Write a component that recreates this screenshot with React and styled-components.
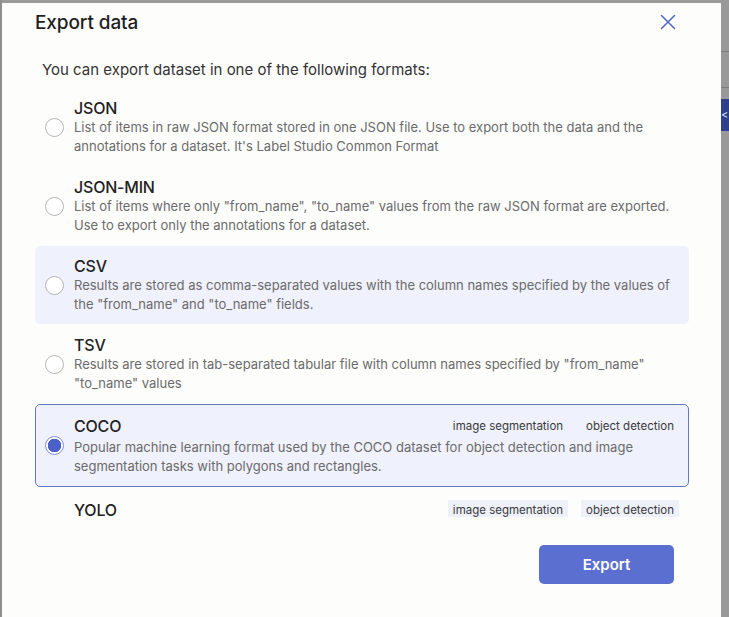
import React, { useState } from "react"
import styled, { createGlobalStyle } from "styled-components"

const GlobalStyle = createGlobalStyle`
    body {
        margin: 0;
        background: #9a9a9a;
        font-family: Inter, "Noto Sans", sans-serif;
        -webkit-font-smoothing: antialiased;
    }
`

const formats = [
    {
        id: "JSON",
        title: "JSON",
        description: "List of items in raw JSON format stored in one JSON file. Use to export both the data and the annotations for a dataset. It's Label Studio Common Format",
    },
    {
        id: "JSON_MIN",
        title: "JSON-MIN",
        description: "List of items where only \"from_name\", \"to_name\" values from the raw JSON format are exported. Use to export only the annotations for a dataset.",
    },
    {
        id: "CSV",
        title: "CSV",
        description: "Results are stored as comma-separated values with the column names specified by the values of the \"from_name\" and \"to_name\" fields.",
        hovered: true,
    },
    {
        id: "TSV",
        title: "TSV",
        description: "Results are stored in tab-separated tabular file with column names specified by \"from_name\" \"to_name\" values",
    },
    {
        id: "COCO",
        title: "COCO",
        tags: ["image segmentation", "object detection"],
        description: "Popular machine learning format used by the COCO dataset for object detection and image segmentation tasks with polygons and rectangles.",
    },
    {
        id: "YOLO",
        title: "YOLO",
        tags: ["image segmentation", "object detection"],
        description: "Popular TXT format is created for each image file. Each txt file contains annotations for the corresponding image file, that is object class, object coordinates, height & width.",
    },
]

const App = () => {

    const [selected, setSelected] = useState("COCO")

    return (
        <>
            <GlobalStyle />
            <Backdrop>
                <LeftStrip />
                <Modal>
                    <Header>
                        <Title>Export data</Title>
                        <CloseButton aria-label="Close">
                            <svg width="16" height="16" viewBox="0 0 16 16" fill="none">
                                <path d="M1.5 1.5L14.5 14.5M14.5 1.5L1.5 14.5" stroke="#5468c4" strokeWidth="1.6" strokeLinecap="round" />
                            </svg>
                        </CloseButton>
                    </Header>
                    <Intro>You can export dataset in one of the following formats:</Intro>
                    <FormatList>
                        {formats.map((format) => (
                            <FormatItem
                                key={format.id}
                                $selected={selected === format.id}
                                $hovered={format.hovered}
                                onClick={() => setSelected(format.id)}
                            >
                                <Radio $checked={selected === format.id} />
                                <FormatBody>
                                    <FormatHead>
                                        <FormatTitle>{format.title}</FormatTitle>
                                        {format.tags && (
                                            <Tags>
                                                {format.tags.map((tag) => (
                                                    <Tag key={tag} $selected={selected === format.id}>{tag}</Tag>
                                                ))}
                                            </Tags>
                                        )}
                                    </FormatHead>
                                    <FormatDescription>{format.description}</FormatDescription>
                                </FormatBody>
                            </FormatItem>
                        ))}
                    </FormatList>
                    <Footer>
                        <ExportButton>Export</ExportButton>
                    </Footer>
                </Modal>
                <RightStrip>
                    <StripLine />
                    <StripLine />
                    <StripTab>&lt;</StripTab>
                </RightStrip>
            </Backdrop>
        </>
    )
}

export default App


const Backdrop = styled.div`
    display: flex;
    height: 617px;
    overflow: hidden;
    background: #9a9a9a;
`

const LeftStrip = styled.div`
    width: 2px;
    background: #8e8e8e;
`

const RightStrip = styled.div`
    width: 8px;
    display: flex;
    flex-direction: column;
    padding-top: 51px;
    background: #999;
`

const StripLine = styled.div`
    height: 1px;
    background: #7d7d7d;
    margin-bottom: 35px;
`

const StripTab = styled.div`
    margin-top: -24px;
    height: 32px;
    background: #2f3f8c;
    color: #dfe3f3;
    font-size: 11px;
    line-height: 32px;
    overflow: hidden;
`

const Modal = styled.div`
    flex: 1;
    margin-top: 3px;
    display: flex;
    flex-direction: column;
    background: #fdfdfc;
    padding: 0 32px 0 33px;
`

const Header = styled.div`
    height: 38px;
    display: flex;
    align-items: center;
    justify-content: space-between;
`

const Title = styled.h2`
    margin: 0;
    font-size: 19px;
    font-weight: 500;
    color: #1f1f1f;
    letter-spacing: -0.1px;
`

const CloseButton = styled.button`
    border: none;
    background: none;
    padding: 0;
    margin-right: 13px;
    display: flex;
    cursor: pointer;
`

const Intro = styled.p`
    margin: 19px 0 8px 7px;
    font-size: 15px;
    line-height: 20px;
    color: #333;
`

const FormatList = styled.div`
    height: 429px;
    overflow: hidden;
    display: flex;
    flex-direction: column;
    gap: 1px;
`

const FormatItem = styled.label`
    display: flex;
    align-items: center;
    gap: 10px;
    padding: 9px 9px ${props => props.$selected ? "10px" : "9px"};
    border-radius: 5px;
    border: 1px solid ${props => props.$selected ? "#6477c4" : "transparent"};
    background: ${props => (props.$selected || props.$hovered) ? "#eff1fc" : "transparent"};
    cursor: pointer;
    flex-shrink: 0;
`

const Radio = styled.span`
    width: 19px;
    height: 19px;
    flex-shrink: 0;
    box-sizing: border-box;
    border-radius: 50%;
    border: 1px solid ${props => props.$checked ? "#7f8dcf" : "#b5b5b5"};
    background: ${props => props.$checked
        ? "radial-gradient(circle, #4b60c9 0 6.5px, #ffffff 7px)"
        : "#ffffff"};
`

const FormatBody = styled.div`
    flex: 1;
    min-width: 0;
`

const FormatHead = styled.div`
    display: flex;
    align-items: center;
    justify-content: space-between;
    min-height: 20px;
`

const FormatTitle = styled.div`
    font-size: 16px;
    line-height: 20px;
    font-weight: 500;
    color: #222;
    letter-spacing: -0.2px;
`

const Tags = styled.div`
    display: flex;
    gap: 13px;
    padding: 2px 0;
`

const Tag = styled.span`
    font-size: 11.5px;
    line-height: 16px;
    padding: 2px 5px;
    color: #3a3a3a;
    background: ${props => props.$selected ? "transparent" : "#eef0fa"};
`

const FormatDescription = styled.div`
    font-size: 13px;
    line-height: 19px;
    color: #6b6b6b;
`

const Footer = styled.div`
    display: flex;
    justify-content: flex-end;
    padding: 28px 15px 0 0;
`

const ExportButton = styled.button`
    width: 135px;
    height: 39px;
    border: none;
    border-radius: 5px;
    background: #5a6fd0;
    color: #ffffff;
    font-family: inherit;
    font-size: 15px;
    font-weight: 600;
    cursor: pointer;
`
